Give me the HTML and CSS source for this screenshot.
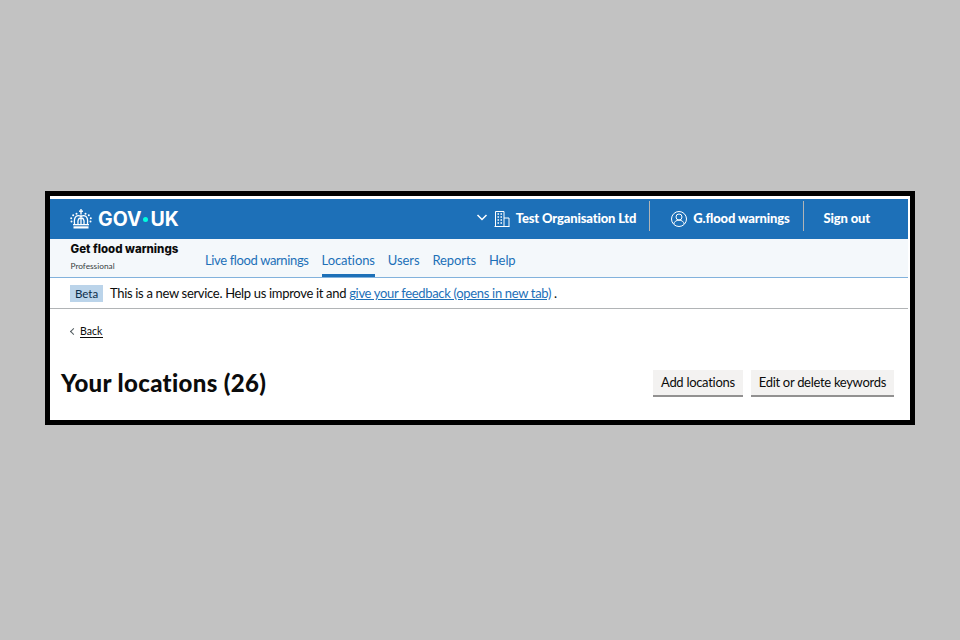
FILE: index.html
```html
<!DOCTYPE html>
<html lang="en">
<head>
<meta charset="utf-8">
<title>Your locations</title>
<link rel="stylesheet" href="styles.css">
</head>
<body>
<div class="frame">
  <div class="page">
    <header class="topbar">
      <a class="logo">
        <svg class="crown" width="22" height="20" viewBox="0 0 22 20">
          <g fill="#fff">
            <rect x="10.300" y="0" width="1.400" height="5.500"/><rect x="9" y="1.500" width="4" height="1.400"/>
            <circle cx="6.500" cy="4.800" r="1"/><circle cx="15.500" cy="4.800" r="1"/>
            <circle cx="3.200" cy="6.300" r="1"/><circle cx="18.800" cy="6.300" r="1"/>
            <circle cx="1.200" cy="9.200" r="1"/><circle cx="20.800" cy="9.200" r="1"/>
            <circle cx="1.500" cy="12.500" r="1"/><circle cx="20.500" cy="12.500" r="1"/>
            <rect x="3" y="15" width="16" height="1.300"/>
            <rect x="3.500" y="17.300" width="15" height="2.200"/>
          </g>
          <g fill="none" stroke="#fff" stroke-width="1.300">
            <path d="M11 6v9"/>
            <path d="M11 7.500C8 5.500 3.500 6.500 4.500 15"/>
            <path d="M11 7.500C14 5.500 18.500 6.500 17.500 15"/>
            <path d="M11 9.500C9 8.500 7.500 10.500 8 15"/>
            <path d="M11 9.500C13 8.500 14.500 10.500 14 15"/>
          </g>
        </svg>
        <span class="wordmark">GOV<span class="dot"></span>UK</span>
      </a>
      <div class="account">
        <div class="acct org">
          <svg class="chev" width="12" height="8" viewBox="0 0 12 8" fill="none" stroke="#fff" stroke-width="1.500"><path d="M1.500 1l4.500 4.500L10.500 1"/></svg>
          <svg class="ico" width="16" height="16" viewBox="0 0 16 16" fill="none" stroke="#fff" stroke-width="1"><path d="M1.500 15.500V.5h8.500v15zM10 7h5v8.500h-5M.5 15.500h15"/><path d="M3.500 3h1.500M6.500 3H8M3.500 6H5M6.500 6H8M3.500 9H5M6.500 9H8M3.500 12H5M6.500 12H8" stroke-width="1.500"/></svg>
          <span>Test Organisation Ltd</span>
        </div>
        <div class="acct user">
          <svg class="ico" width="16" height="16" viewBox="0 0 16 16" fill="none" stroke="#fff" stroke-width="1"><circle cx="8" cy="8" r="7.500"/><circle cx="8" cy="6" r="3"/><path d="M2.800 13c.5-2.500 2.500-3.800 5.200-3.800s4.700 1.300 5.200 3.800"/></svg>
          <span>G.flood warnings</span>
        </div>
        <div class="acct signout"><span>Sign out</span></div>
      </div>
    </header>
    <div class="subnav">
      <div class="service">
        <div class="service-name">Get flood warnings</div>
        <div class="service-tier">Professional</div>
      </div>
      <nav class="nav">
        <a class="nav-item">Live flood warnings</a>
        <a class="nav-item active">Locations</a>
        <a class="nav-item">Users</a>
        <a class="nav-item">Reports</a>
        <a class="nav-item">Help</a>
      </nav>
    </div>
    <div class="phase">
      <span class="tag">Beta</span>
      <span>This is a new service. Help us improve it and <a class="link">give your feedback (opens in new tab)</a> .</span>
    </div>
    <div class="main">
      <a class="back"><span class="chevron"></span><span class="back-text">Back</span></a>
      <div class="title-row">
        <h1>Your locations (26)</h1>
        <div class="actions">
          <button class="btn">Add locations</button>
          <button class="btn">Edit or delete keywords</button>
        </div>
      </div>
    </div>
  </div>
</div>
</body>
</html>
```

FILE: styles.css
```css
* { box-sizing: border-box; }
html, body { height: 100%; }
body {
  margin: 0;
  padding-top: 191px;
  background: #c2c2c2;
  display: flex;
  align-items: flex-start;
  justify-content: center;
  font-family: "Lato", sans-serif;
  color: #0b0c0c;
}
.frame {
  width: 870px;
  height: 234px;
  border: 5px solid #000;
  background: #fff;
  padding: 3px 2px 0 0;
}
.page { display: flex; flex-direction: column; height: 100%; }
.topbar {
  height: 40px;
  background: #1d70b8;
  color: #fff;
  display: flex;
  align-items: center;
  justify-content: space-between;
  padding-left: 20px;
}
.logo { display: flex; align-items: center; gap: 6px; }
.crown { display: block; }
.wordmark {
  font-family: "Inter", sans-serif;
  font-weight: 700;
  font-size: 19.500px;
  display: flex;
  align-items: center;
}
.dot { width: 5px; height: 5px; border-radius: 50%; background: #00ffe0; margin: 0 2px; }
.account {
  display: flex;
  align-self: flex-start;
  margin-top: 2px;
  height: 30px;
  font-size: 13px;
  font-weight: 900;
  letter-spacing: -0.150px;
}
.acct { display: flex; align-items: center; height: 30px; padding-top: 4px; }
.chev { margin-right: 6px; }
.ico { margin: 2px 6px 0 0; }
.org { padding-right: 13px; border-right: 1px solid #b1b4b6; }
.user { padding: 4px 13px 0 21px; border-right: 1px solid #b1b4b6; }
.signout { padding: 4px 38px 0 20px; }
.subnav {
  height: 39px;
  background: #f4f8fb;
  border-bottom: 1px solid #82b2dc;
  display: flex;
  padding-left: 20.500px;
}
.service { width: 134.500px; padding-top: 3px; }
.service-name { font-family: "Inter", sans-serif; font-weight: 800; font-size: 11.500px; line-height: 15px; }
.service-tier { font-size: 8.300px; line-height: 10px; margin-top: 4px; color: #383f43; }
.nav { display: flex; gap: 13px; font-size: 13px; letter-spacing: -0.100px; color: #1d70b8; }
.nav-item { height: 38px; line-height: 18px; padding-top: 12px; }
.nav-item:first-child { letter-spacing: -0.370px; }
.active { border-bottom: 3px solid #1d70b8; }
.phase {
  height: 31px;
  border-bottom: 1px solid #b1b4b6;
  padding-left: 20px;
  display: flex;
  align-items: center;
  gap: 7px;
  font-size: 13px;
  letter-spacing: -0.320px;
}
.tag { background: #bbd4ea; width: 33px; height: 17px; line-height: 17px; text-align: center; font-size: 11.500px; letter-spacing: 0; color: #0c2d4a; }
.link { color: #1d70b8; text-decoration: underline; }
.main { padding-left: 11px; flex: 1; position: relative; }
.back { display: flex; align-items: center; margin: 14px 0 0 10px; height: 17px; font-size: 10.500px; }
.chevron {
  width: 5px; height: 5px;
  border-left: 1px solid #505a5f;
  border-bottom: 1px solid #505a5f;
  transform: rotate(45deg);
  margin-right: 4px;
}
.back-text { border-bottom: 1px solid #0b0c0c; line-height: 12px; padding-right: 1px; }
.title-row { display: flex; align-items: center; justify-content: space-between; margin-top: 28px; padding-right: 14px; }
h1 { margin: 0; font-size: 24px; line-height: 30px; font-weight: 900; letter-spacing: 0.350px; }
.actions { display: flex; gap: 8px; }
.btn {
  height: 27px;
  padding: 0 8px;
  border: 0;
  border-bottom: 2px solid #929191;
  background: #f3f2f1;
  color: #0b0c0c;
  font-family: inherit;
  font-size: 13px;
  letter-spacing: -0.300px;
}
```
